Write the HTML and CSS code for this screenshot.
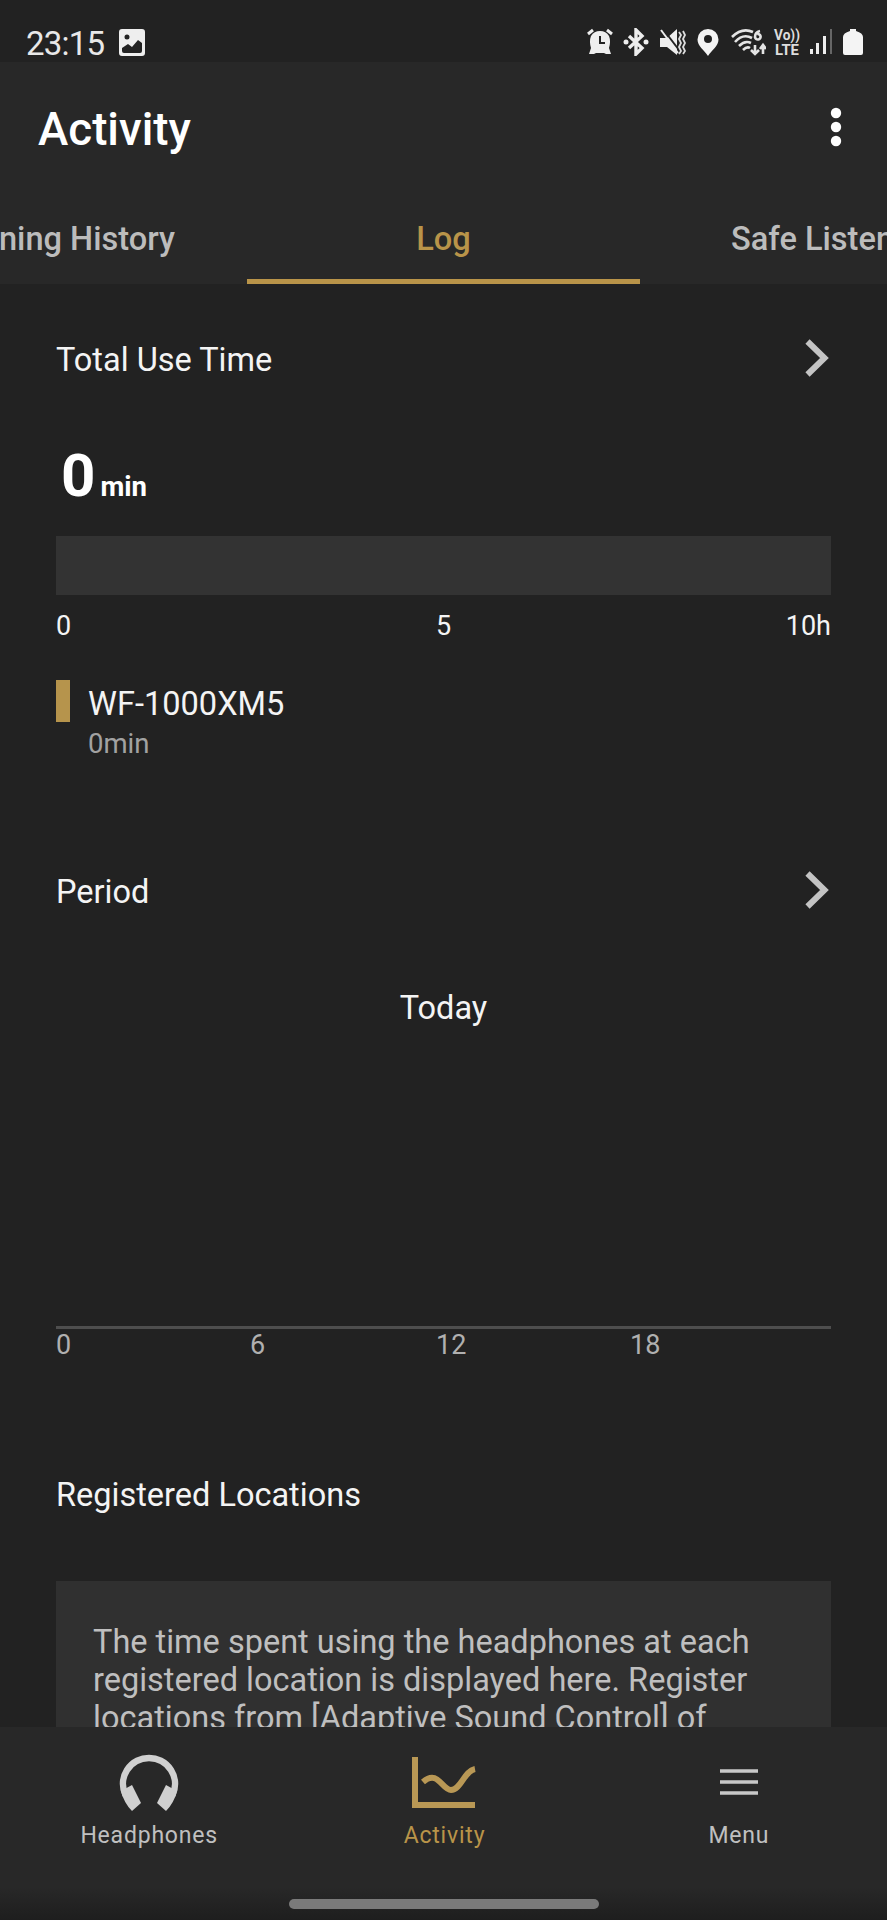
FILE: index.html
```html
<!DOCTYPE html>
<html lang="en">
<head>
<meta charset="utf-8">
<title>Activity</title>
<link rel="stylesheet" href="styles.css">
</head>
<body>
<div class="screen">
  <div class="statusbar">
    <span class="clock">23:15</span>
    <svg class="picture" width="26" height="27" viewBox="0 0 26 27"><path fill="#eee" fill-rule="evenodd" d="M3 0H23a3 3 0 0 1 3 3V24a3 3 0 0 1-3 3H3a3 3 0 0 1-3-3V3a3 3 0 0 1 3-3ZM8 5.500a2.500 2.500 0 1 0 0 5 2.500 2.500 0 0 0 0-5ZM3 22q0 2 2 2H21q2 0 2-2V14l-4-3-6 7-4-3-6 4Z"/></svg>
    <div class="indicators">
      <svg width="26" height="27" viewBox="0 0 26 27"><path fill="#eee" d="M13 3Q19 3 22 8Q24 13 22 20L24 26H19L17 25H9L7 26H2L4 20Q2 13 4 8Q7 3 13 3Z"/><path d="M1 6 6 2M20 2l5 4" stroke="#eee" stroke-width="3"/><path d="M13 8v7h5" fill="none" stroke="#222" stroke-width="2"/></svg>
      <svg class="bt" width="26" height="28" viewBox="0 0 26 28"><path d="M6 8 19 20l-6 6V2l6 6L6 20" fill="none" stroke="#eee" stroke-width="3.400"/><circle cx="3" cy="14" r="2.500" fill="#eee"/><circle cx="23" cy="14" r="2.500" fill="#eee"/></svg>
      <svg class="mute" width="27" height="28" viewBox="0 0 27 28"><path d="M1 10H8L18 1V27L8 19H1Z" fill="#eee"/><path d="M4 1 20 22" stroke="#222" stroke-width="2"/><path d="M2 2 19 25" stroke="#eee" stroke-width="2"/><path d="m20 4 2 3-2 4 2 4-2 4 2 4-2 3M24 3l2 4-2 4 2 4-2 4 2 4-2 3" fill="none" stroke="#ddd" stroke-width="1.800"/></svg>
      <svg class="pin" width="22" height="28" viewBox="0 0 22 28"><path fill="#f4f4f4" fill-rule="evenodd" d="M11 1A10.500 10.500 0 0 0 .5 11.500C.5 18 7 22 11 28 15 22 21.500 18 21.500 11.500A10.500 10.500 0 0 0 11 1Zm0 6a4 4 0 1 1 0 8 4 4 0 0 1 0-8Z"/></svg>
      <svg class="wifi" width="35" height="28" viewBox="0 0 35 28"><g fill="none" stroke="#e4e4e4" stroke-width="2.600"><path d="M1 9Q11-1 22 4M4 14Q12 5 21 10M8 18q6-6 12-3M12 22q4-4 7-2"/><path d="M29 3q-5 1-5 6a2.800 2.800 0 1 0 2-3M24 17v9m-4-4 4 4 4-4M32 26v-9m-3 4 3-4 3 4"/></g></svg>
      <svg class="volte" width="27" height="28" viewBox="0 0 27 28"><g fill="#ddd" font-family="Roboto, sans-serif" font-weight="700" font-size="15.500"><text x="0" y="12" textLength="26" lengthAdjust="spacingAndGlyphs">Vo))</text><text x="1" y="27" textLength="24" lengthAdjust="spacingAndGlyphs">LTE</text></g></svg>
      <svg class="signal" width="23" height="26" viewBox="0 0 23 26"><path fill="#eee" d="M0 21h3v5H0zM6 15h3v11H6zM13 8h3v18h-3z"/><path fill="#666" d="M20 1h2v25h-2z"/></svg>
      <svg class="battery" width="20" height="27" viewBox="0 0 20 27"><path fill="#f4f4f4" d="M7 1h6v2q7 2 7 6v16q0 2-2 2H2q-2 0-2-2V9q0-4 7-6Z"/></svg>
    </div>
  </div>

  <header class="header">
    <div class="titlebar">
      <h1 class="title">Activity</h1>
      <svg class="more" width="12" height="40" viewBox="0 0 12 40"><g fill="#fff"><circle cx="6" cy="6" r="5.200"/><circle cx="6" cy="20" r="5.200"/><circle cx="6" cy="34" r="5.200"/></g></svg>
    </div>
    <nav class="tabs">
      <div class="tab tab-prev">Listening History</div>
      <div class="tab tab-active">Log</div>
      <div class="tab tab-next">Safe Listening</div>
    </nav>
  </header>

  <main class="content">
    <section class="usage">
      <div class="row">
        <h2 class="heading">Total Use Time</h2>
        <svg class="chevron" width="26" height="38" viewBox="0 0 26 38"><path d="M2.500 2.500 19.500 19 2.500 35.500" fill="none" stroke="#c4c4c4" stroke-width="6"/></svg>
      </div>
      <div class="total"><span class="total-value">0</span><span class="total-unit">min</span></div>
      <div class="bar"></div>
      <div class="scale"><span>0</span><span>5</span><span>10h</span></div>
      <div class="device">
        <i class="swatch"></i>
        <div>
          <div class="device-name">WF-1000XM5</div>
          <div class="device-time">0min</div>
        </div>
      </div>
    </section>

    <section class="period">
      <div class="row">
        <h2 class="heading">Period</h2>
        <svg class="chevron" width="26" height="38" viewBox="0 0 26 38"><path d="M2.500 2.500 19.500 19 2.500 35.500" fill="none" stroke="#c4c4c4" stroke-width="6"/></svg>
      </div>
      <div class="range">Today</div>
      <div class="plot"></div>
      <div class="hours"><span>0</span><span>6</span><span>12</span><span>18</span></div>
    </section>

    <section class="locations">
      <h2 class="heading">Registered Locations</h2>
      <p class="card">The time spent using the headphones at each<br>registered location is displayed here. Register<br>locations from [Adaptive Sound Control] of</p>
    </section>
  </main>

  <footer class="bottomnav">
    <div class="items">
      <div class="item">
        <svg width="60" height="60" viewBox="0 0 60 60"><path d="M6.500 42A26 26 0 1 1 53.500 42" fill="none" stroke="#d0d0d0" stroke-width="6.500"/><path fill="#d0d0d0" d="M2 38 13 32 22 50 13 58Q5 50 2 38ZM58 38 47 32 38 50 47 58Q55 50 58 38Z"/></svg>
        <span>Headphones</span>
      </div>
      <div class="item item-active">
        <svg width="66" height="60" viewBox="0 0 66 60"><path d="M4 4V52H64" fill="none" stroke="#b99855" stroke-width="6"/><path d="M12 29C27 16 31 37 40 37 50 37 53 18 64 16" fill="none" stroke="#b99855" stroke-width="6"/></svg>
        <span>Activity</span>
      </div>
      <div class="item">
        <svg width="60" height="60" viewBox="0 0 60 60"><path d="M11 18H49M11 29H49M11 40H49" stroke="#c8c8c8" stroke-width="3.500"/></svg>
        <span>Menu</span>
      </div>
    </div>
    <div class="handle"></div>
  </footer>
</div>
</body>
</html>
```
FILE: styles.css
```css
* { box-sizing: border-box; }
body { margin: 0; background: #222; }
svg { display: block; flex: none; }
h1, h2, p { margin: 0; font-weight: 400; }

.screen {
  width: 887px;
  height: 1920px;
  display: flex;
  flex-direction: column;
  overflow: hidden;
  background: #222;
  color: #f4f4f4;
  font-family: Roboto, "Liberation Sans", sans-serif;
}

.statusbar { flex: none; height: 62px; padding: 28px 24px 0 26px; display: flex; align-items: flex-start; }
.clock { font-size: 33px; letter-spacing: -0.8px; line-height: 38px; margin-top: -3px; width: 93px; color: #e8e8e8; }
.picture { margin-top: 1px; }
.indicators { margin-left: auto; display: flex; align-items: flex-start; width: 276px; }
.bt { margin-left: 10px; }
.mute { margin-left: 10px; }
.pin { margin-left: 11px; }
.wifi { margin-left: 12px; }
.volte { margin-left: 8px; overflow: visible; }
.signal { margin-left: 9px; }
.battery { margin-left: 10px; }

.header { flex: none; height: 222px; background: #282828; display: flex; flex-direction: column; }
.titlebar { height: 132px; padding: 0 45px 0 38px; display: flex; align-items: center; justify-content: space-between; }
.title { font-size: 45.7px; font-weight: 500; line-height: 60px; margin-top: 4px; color: #fff; }
.more { margin-bottom: 2px; }
.tabs { height: 90px; display: grid; grid-template-columns: 247px 393px 247px; }
.tab { font-size: 32.6px; font-weight: 500; line-height: 90px; white-space: nowrap; color: #bcbcbc; overflow: hidden; }
.tab-prev { display: flex; justify-content: flex-end; padding-right: 72px; }
.tab-active { text-align: center; color: #b99449; border-bottom: 5px solid #b99449; }
.tab-next { padding-left: 91px; }

.content { flex: 1; min-height: 0; overflow: hidden; padding: 0 56px; }
.row { display: flex; align-items: center; justify-content: space-between; height: 44px; }
.heading { font-size: 32.5px; line-height: 44px; }
.row .heading { padding-top: 4px; }

.usage { padding-top: 52px; }
.total { height: 72px; margin-top: 60px; padding-left: 5px; font-weight: 700; color: #fff; line-height: 72px; white-space: nowrap; }
.total-value { font-size: 60px; }
.total-unit { font-size: 27.5px; margin-left: 5px; }
.bar { height: 59px; margin-top: 24px; background: #333; }
.scale { display: grid; grid-template-columns: 1fr auto 1fr; font-size: 27px; line-height: 32px; margin-top: 15px; }
.scale span:last-child { text-align: right; }
.device { display: flex; gap: 18px; margin-top: 38px; }
.swatch { width: 14px; height: 42px; background: #b6944c; }
.device-name { font-size: 32.6px; line-height: 38px; margin-top: 5px; }
.device-time { font-size: 27.5px; line-height: 34px; margin-top: 4px; color: #a2a2a2; }

.period { margin-top: 107px; }
.range { font-size: 32.5px; line-height: 38px; text-align: center; margin-top: 77px; }
.plot { height: 302px; border-bottom: 3px solid #4e4e4e; }
.hours { display: grid; grid-template-columns: 194px 186px 194px 1fr; font-size: 27px; line-height: 32px; color: #b0b0b0; }

.locations { margin-top: 112px; }
.card { margin-top: 64px; background: #303030; height: 250px; padding: 42px 37px; font-size: 32.5px; line-height: 38px; color: #bfbfbf; white-space: nowrap; }

.bottomnav { flex: none; height: 193px; background: linear-gradient(#282828 0 83%, #1e1e1e); display: flex; flex-direction: column; align-items: center; }
.items { width: 100%; height: 172px; padding: 26px 1px 0 3px; display: grid; grid-template-columns: 1fr 1fr 1fr; }
.item { display: flex; flex-direction: column; align-items: center; gap: 8px; font-size: 23px; line-height: 30px; letter-spacing: 0.8px; color: #c0c0c0; }
.item:first-child { padding-right: 2px; }
.item-active { color: #b99449; }
.handle { width: 310px; height: 10px; border-radius: 5px; background: #7a7a7a; }
```
